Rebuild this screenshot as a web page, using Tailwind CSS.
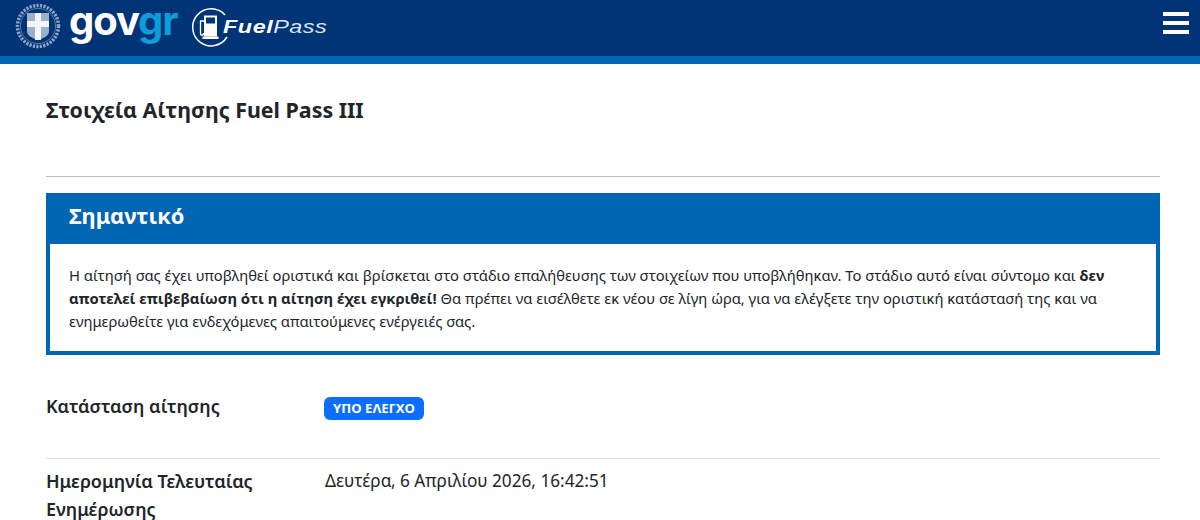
<!DOCTYPE html>
<html lang="el">
<head>
<meta charset="utf-8">
<script src="https://cdn.jsdelivr.net/npm/@tailwindcss/browser@4"></script>
</head>
<body class="bg-white font-['Noto_Sans',sans-serif] text-[#212529] overflow-hidden">
<header class="h-[64px] bg-[#003476] border-b-[8px] border-[#0065b3] flex justify-between pl-[14px] pr-[11px]">
  <div class="flex items-start">
    <svg width="48" height="48" viewBox="0 0 48 48" class="mt-[2px]">
      <circle cx="24" cy="24" r="20.500" fill="none" stroke="#8fa5c3" stroke-width="3.500" stroke-dasharray="2.200 1.300"/>
      <circle cx="24" cy="24" r="17.600" fill="none" stroke="#5c7ba3" stroke-width="1"/>
      <path d="M13 11h22v18c0 5-5 7-11 9-6-2-11-4-11-9z" fill="#9db0ca"/>
      <path d="M21 11h6v8h8v6h-8v13h-6V25h-8v-6h8z" fill="#f4f6fa"/>
    </svg>
    <div class="ml-[7px] w-[123px] shrink-0 h-[48px] text-[40px] leading-[42px] font-bold font-['Inter',sans-serif] tracking-[-1.100px] text-white">gov<span class="text-[#0d9ddb]">gr</span></div>
    <svg width="40" height="40" viewBox="0 0 40 40" class="mt-[7px] shrink-0">
      <path d="M33 8A18.500 18.500 0 1 0 35 30" fill="none" stroke="#fff" stroke-width="1.500"/>
      <path d="M12 8.500h13v21H12z" fill="#fff"/>
      <path d="M14 10.500h9v6h-9z" fill="#003476"/>
      <path d="M10.500 29.500h16v2.500h-16z" fill="#fff"/>
      <path d="M12 14H8.500v12c0 3 3 3 3 0" fill="none" stroke="#fff" stroke-width="1.300"/>
    </svg>
    <div class="-ml-[9px] mt-[17px] text-[18px] leading-[20px] italic text-white font-['Liberation_Sans',sans-serif] tracking-[0.4px] origin-left scale-x-[1.3] whitespace-nowrap"><b>Fuel</b><span class="text-[#dbe4f0]">Pass</span></div>
  </div>
  <div class="flex flex-col gap-[5px] pt-[12px]" aria-label="menu">
    <span class="block w-[26px] h-[4px] bg-white"></span>
    <span class="block w-[26px] h-[4px] bg-white"></span>
    <span class="block w-[26px] h-[4px] bg-white"></span>
  </div>
</header>
<main class="pl-[46px] pr-[40px]">
  <h1 class="mt-[31px] h-[81px] text-[21.400px] leading-[30px] font-bold">Στοιχεία Αίτησης Fuel Pass III</h1>
  <hr class="border-0 h-[1px] bg-[#b9b9b9]">
  <section class="mt-[16px] border-[4px] border-t-0 border-[#0065b3] h-[162px]">
    <h2 class="-mx-[4px] bg-[#0065b3] h-[51px] pl-[23px] pt-[8px] text-[21.800px] leading-[30px] font-bold text-white">Σημαντικό</h2>
    <p class="px-[19px] pt-[20px] text-[14.770px] leading-[23px]">Η αίτησή σας έχει υποβληθεί οριστικά και βρίσκεται στο στάδιο επαλήθευσης των στοιχείων που υποβλήθηκαν. Το στάδιο αυτό είναι σύντομο και <b>δεν αποτελεί επιβεβαίωση ότι η αίτηση έχει εγκριθεί!</b> Θα πρέπει να εισέλθετε εκ νέου σε λίγη ώρα, για να ελέγξετε την οριστική κατάστασή της και να ενημερωθείτε για ενδεχόμενες απαιτούμενες ενέργειές σας.</p>
  </section>
  <div class="grid grid-cols-[279px_1fr] pt-[37px] h-[104px] border-b border-[#dedede]">
    <div class="text-[18px] leading-[28px] font-semibold">Κατάσταση αίτησης</div>
    <div><span class="inline-block -ml-[1px] mt-[5px] bg-[#0d6efd] text-white text-[13.200px] leading-[23px] h-[23px] font-bold px-[9px] rounded-[6px]">ΥΠΟ ΕΛΕΓΧΟ</span></div>
  </div>
  <div class="grid grid-cols-[279px_1fr] pt-[8px]">
    <div class="text-[18px] leading-[28px] font-semibold">Ημερομηνία Τελευταίας Ενημέρωσης</div>
    <div class="text-[17.200px] leading-[28px]">Δευτέρα, 6 Απριλίου 2026, 16:42:51</div>
  </div>
</main>
</body>
</html>
